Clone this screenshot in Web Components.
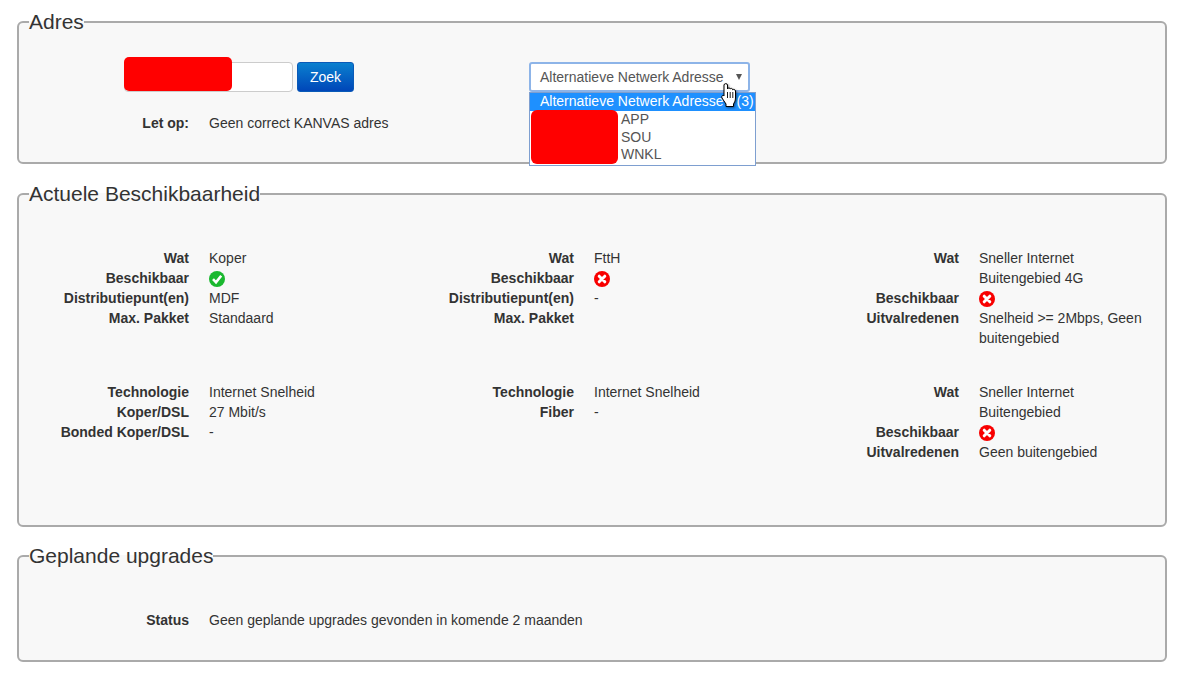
<!DOCTYPE html>
<html lang="nl">
<head>
<meta charset="utf-8">
<title>Adres</title>
<style>
  html, body { margin: 0; background: #fff; }
  body { font: 14px/20px "Liberation Sans", Arial, sans-serif; color: #333; padding: 10px 17px 0 17px; width: 1150px; }
</style>
</head>
<body>

<info-panel title="Adres" style="height:154px">
  <address-search></address-search>
  <info-fact label="Let op:" style="margin-top:21px">Geen correct KANVAS adres</info-fact>
</info-panel>

<info-panel title="Actuele Beschikbaarheid" style="height:345px;margin-top:18px">
  <fact-grid style="padding-top:43px">
    <fact-column>
      <info-fact label="Wat">Koper</info-fact>
      <info-fact label="Beschikbaar"><status-icon kind="ok"></status-icon></info-fact>
      <info-fact label="Distributiepunt(en)">MDF</info-fact>
      <info-fact label="Max. Pakket">Standaard</info-fact>
    </fact-column>
    <fact-column>
      <info-fact label="Wat">FttH</info-fact>
      <info-fact label="Beschikbaar"><status-icon kind="no"></status-icon></info-fact>
      <info-fact label="Distributiepunt(en)">-</info-fact>
      <info-fact label="Max. Pakket"></info-fact>
    </fact-column>
    <fact-column>
      <info-fact label="Wat">Sneller Internet<br>Buitengebied 4G</info-fact>
      <info-fact label="Beschikbaar"><status-icon kind="no"></status-icon></info-fact>
      <info-fact label="Uitvalredenen">Snelheid &gt;= 2Mbps, Geen buitengebied</info-fact>
    </fact-column>
    <fact-column>
      <info-fact label="Technologie">Internet Snelheid</info-fact>
      <info-fact label="Koper/DSL">27 Mbit/s</info-fact>
      <info-fact label="Bonded Koper/DSL">-</info-fact>
    </fact-column>
    <fact-column>
      <info-fact label="Technologie">Internet Snelheid</info-fact>
      <info-fact label="Fiber">-</info-fact>
    </fact-column>
    <fact-column>
      <info-fact label="Wat">Sneller Internet<br>Buitengebied</info-fact>
      <info-fact label="Beschikbaar"><status-icon kind="no"></status-icon></info-fact>
      <info-fact label="Uitvalredenen">Geen buitengebied</info-fact>
    </fact-column>
  </fact-grid>
</info-panel>

<info-panel title="Geplande upgrades" style="height:118px;margin-top:17px">
  <info-fact label="Status" style="padding-top:43px">Geen geplande upgrades gevonden in komende 2 maanden</info-fact>
</info-panel>

<script>
class InfoPanel extends HTMLElement {
  constructor() {
    super();
    this.attachShadow({ mode: 'open' });
  }
  connectedCallback() {
    this.shadowRoot.innerHTML = `
      <style>
        :host { display: block; box-sizing: border-box; }
        fieldset {
          box-sizing: border-box; height: 100%; margin: 0; padding: 0;
          min-width: 0; background: #f8f8f8;
          border: 2px solid #aaa; border-radius: 6px;
        }
        legend {
          margin-left: 10px; padding: 0; font-size: 21px; line-height: 23px; color: #333;
        }
      </style>
      <fieldset>
        <legend>${this.getAttribute('title')}</legend>
        <slot></slot>
      </fieldset>`;
  }
}
customElements.define('info-panel', InfoPanel);

class InfoFact extends HTMLElement {
  constructor() {
    super();
    this.attachShadow({ mode: 'open' });
  }
  connectedCallback() {
    this.shadowRoot.innerHTML = `
      <style>
        :host { display: grid; grid-template-columns: 170px 1fr; column-gap: 20px; line-height: 20px; }
        b { text-align: right; font-weight: bold; }
      </style>
      <b>${this.getAttribute('label')}</b>
      <div><slot></slot></div>`;
  }
}
customElements.define('info-fact', InfoFact);

class FactGrid extends HTMLElement {
  constructor() {
    super();
    this.attachShadow({ mode: 'open' }).innerHTML = `
      <style>
        :host { display: grid; grid-template-columns: 385px 385px 1fr; row-gap: 34px; }
      </style>
      <slot></slot>`;
  }
}
customElements.define('fact-grid', FactGrid);

class FactColumn extends HTMLElement {
  constructor() {
    super();
    this.attachShadow({ mode: 'open' }).innerHTML = `
      <style>:host { display: block; }</style>
      <slot></slot>`;
  }
}
customElements.define('fact-column', FactColumn);

class StatusIcon extends HTMLElement {
  constructor() {
    super();
    this.attachShadow({ mode: 'open' });
  }
  connectedCallback() {
    const ok = this.getAttribute('kind') === 'ok';
    const mark = ok
      ? '<path d="M4 8.2 7 11.3 12.2 4.8" fill="none" stroke="#fff" stroke-width="2.6"/>'
      : '<path d="M5.2 5.2 10.8 10.8M10.8 5.2 5.2 10.8" fill="none" stroke="#fff" stroke-width="3" stroke-linecap="round"/>';
    this.shadowRoot.innerHTML = `
      <style>
        :host { display: block; height: 17px; padding-top: 3px; }
        svg { display: block; }
      </style>
      <svg width="16" height="16" viewBox="0 0 16 16">
        <circle cx="8" cy="8" r="8" fill="${ok ? '#1ab82f' : '#f80000'}"/>${mark}
      </svg>`;
  }
}
customElements.define('status-icon', StatusIcon);

class HandCursor extends HTMLElement {
  constructor() {
    super();
    this.attachShadow({ mode: 'open' }).innerHTML = `
      <style>
        :host { display: block; width: 16px; height: 25px; }
        svg { display: block; overflow: visible; filter: drop-shadow(1px 1px 1px rgba(0,0,0,.45)); }
      </style>
      <svg width="16" height="25" viewBox="0 0 16 25">
        <path d="M3 2C3 .2 6.5 .2 6.5 2V6C7 4.5 9 4.5 9.2 6 9.8 5 11.5 5.2 11.7 6.8 12.3 6 14.3 6.4 14.5 8V15C14.5 18 13 20 12.5 21V23.5H5V21L1 15C0 13 2 11.5 3 13Z" fill="#fff" stroke="#000" stroke-width="1" stroke-linejoin="round"/>
        <path d="M6.5 9V15M9.2 9V15M11.8 9V15" stroke="#000" stroke-width=".9" fill="none"/>
      </svg>`;
  }
}
customElements.define('hand-cursor', HandCursor);

class AddressSearch extends HTMLElement {
  constructor() {
    super();
    this.attachShadow({ mode: 'open' }).innerHTML = `
      <style>
        :host { display: flex; align-items: flex-start; position: relative; padding: 29px 0 0 105px; }
        .input {
          box-sizing: border-box; width: 169px; height: 30px;
          background: #fff; border: 1px solid #ccc; border-radius: 4px;
        }
        button {
          box-sizing: border-box; width: 57px; height: 30px; margin-left: 4px; padding: 0;
          font: 14px "Liberation Sans", Arial, sans-serif; color: #fff;
          background: linear-gradient(#0a80cf, #0046b8);
          border: 1px solid #0a5ab8; border-radius: 3px;
        }
        .redact { position: absolute; background: #f00; border-radius: 5px; }
        .search-mask { left: 105px; top: 24px; width: 108px; height: 34px; }
        .select {
          box-sizing: border-box; width: 221px; height: 30px; margin-left: 175px; padding: 0 0 0 9px;
          display: flex; align-items: center; justify-content: space-between;
          background: #fff; color: #555; border: 2px solid #8db4e8; border-radius: 3px;
        }
        .arrow {
          width: 0; height: 0; margin-right: 6px;
          border-style: solid; border-width: 6px 3px 0 3px; border-color: #555 transparent transparent;
        }
        .menu {
          position: absolute; left: 510px; top: 59px; width: 227px; height: 74px; box-sizing: border-box;
          background: #fff; border: 1px solid #7e9fd0; color: #555; z-index: 2;
          line-height: 17.5px;
        }
        .menu .active { background: #1e90ff; color: #fff; height: 18px; line-height: 17px; padding-left: 10px; white-space: nowrap; }
        .menu .active span { margin-left: 9px; }
        .menu .item { padding-left: 91px; }
        .menu-mask { left: 1px; top: 17px; width: 87px; height: 54px; border-radius: 6px; }
        hand-cursor { position: absolute; left: 702px; top: 50px; z-index: 3; }
      </style>
      <div class="input"></div>
      <div class="redact search-mask"></div>
      <button>Zoek</button>
      <div class="select"><span>Alternatieve Netwerk Adresse</span><span class="arrow"></span></div>
      <div class="menu">
        <div class="active">Alternatieve Netwerk Adresse <span>(3)</span></div>
        <div class="item">APP</div>
        <div class="item">SOU</div>
        <div class="item">WNKL</div>
        <div class="redact menu-mask"></div>
      </div>
      <hand-cursor></hand-cursor>`;
  }
}
customElements.define('address-search', AddressSearch);
</script>
</body>
</html>
